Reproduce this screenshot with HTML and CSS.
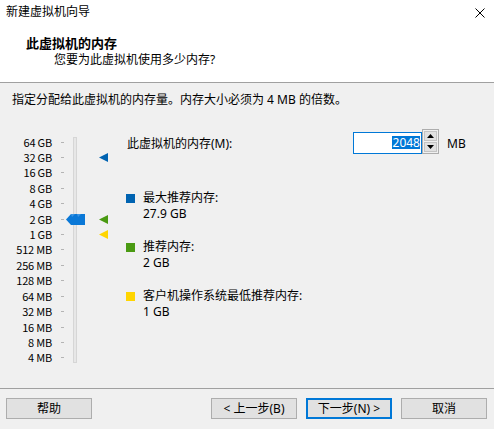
FILE: index.html
```html
<!DOCTYPE html>
<html lang="zh-CN">
<head>
<meta charset="utf-8">
<title>新建虚拟机向导</title>
<link rel="stylesheet" href="styles.css">
</head>
<body>
<div class="window">
  <div class="titlebar">
    <span class="title">新建虚拟机向导</span>
    <svg class="close" width="10" height="10" viewBox="0 0 10 10"><path d="M0.5 0.5L9.5 9.5M9.5 0.5L0.5 9.5" stroke="#000" stroke-width="1"/></svg>
  </div>
  <div class="header">
    <div class="h-title">此虚拟机的内存</div>
    <div class="h-sub">您要为此虚拟机使用多少内存?</div>
  </div>
  <div class="content">
    <p class="intro">指定分配给此虚拟机的内存量。内存大小必须为 4 MB 的倍数。</p>
    <div class="main">
      <div class="scale">
        <div class="track"></div>

        <span class="lbl r1">64 GB</span><i class="tick r1"></i>
        <span class="lbl r2">32 GB</span><i class="tick r2"></i>
        <span class="lbl r3">16 GB</span><i class="tick r3"></i>
        <span class="lbl r4">8 GB</span><i class="tick r4"></i>
        <span class="lbl r5">4 GB</span><i class="tick r5"></i>
        <span class="lbl r6">2 GB</span><i class="tick r6"></i>
        <span class="lbl r7">1 GB</span><i class="tick r7"></i>
        <span class="lbl r8">512 MB</span><i class="tick r8"></i>
        <span class="lbl r9">256 MB</span><i class="tick r9"></i>
        <span class="lbl r10">128 MB</span><i class="tick r10"></i>
        <span class="lbl r11">64 MB</span><i class="tick r11"></i>
        <span class="lbl r12">32 MB</span><i class="tick r12"></i>
        <span class="lbl r13">16 MB</span><i class="tick r13"></i>
        <span class="lbl r14">8 MB</span><i class="tick r14"></i>
        <span class="lbl r15">4 MB</span><i class="tick r15"></i>

        <svg class="thumb r6" width="19" height="11" viewBox="0 0 19 11"><polygon points="0,5.5 5,0 19,0 19,11 5,11" fill="#0a78d7"/><polygon points="5,0 9,0 6,3" fill="#3d95e3"/><polygon points="11,0 15,0 12,3" fill="#3d95e3"/></svg>

        <svg class="marker r2" width="9" height="9" viewBox="0 0 9 9"><polygon points="0,4.5 9,0 9,9" fill="#0063b1"/></svg>
        <svg class="marker r6" width="9" height="9" viewBox="0 0 9 9"><polygon points="0,4.5 9,0 9,9" fill="#4a9a12"/></svg>
        <svg class="marker r7" width="9" height="9" viewBox="0 0 9 9"><polygon points="0,4.5 9,0 9,9" fill="#ffd500"/></svg>
      </div>

      <div class="panel">
        <div class="mem-row">
          <label class="mem-label">此虚拟机的内存(M):</label>
          <div class="mem-input"><span class="sel">2048</span></div>
          <div class="spin">
            <div class="spin-btn"><svg width="7" height="4" viewBox="0 0 7 4"><polygon points="3.5,0 7,4 0,4" fill="#000"/></svg></div>
            <div class="spin-btn"><svg width="7" height="4" viewBox="0 0 7 4"><polygon points="0,0 7,0 3.5,4" fill="#000"/></svg></div>
          </div>
          <span class="unit">MB</span>
        </div>

        <div class="legend">
          <div class="item">
            <i class="sq blue"></i>
            <div class="item-text">最大推荐内存:<br>27.9 GB</div>
          </div>
          <div class="item">
            <i class="sq green"></i>
            <div class="item-text">推荐内存:<br>2 GB</div>
          </div>
          <div class="item">
            <i class="sq yellow"></i>
            <div class="item-text">客户机操作系统最低推荐内存:<br>1 GB</div>
          </div>
        </div>
      </div>
    </div>
  </div>
  <div class="footer">
    <button class="btn">帮助</button>
    <div class="nav">
      <button class="btn">&lt; 上一步(B)</button>
      <button class="btn default">下一步(N) &gt;</button>
      <button class="btn">取消</button>
    </div>
  </div>
</div>
</body>
</html>
```

FILE: styles.css
```css
* {
  box-sizing: border-box;
}

html, body {
  margin: 0;
  padding: 0;
}

body {
  width: 494px;
  height: 429px;
  overflow: hidden;
  font-family: "Noto Sans", "Noto Sans CJK SC", sans-serif;
  font-size: 12px;
  color: #000;
  background: #f0f0f0;
}

.window {
  display: flex;
  flex-direction: column;
  height: 429px;
}

/* title bar */
.titlebar {
  height: 24px;
  display: flex;
  align-items: center;
  justify-content: space-between;
  padding: 0 9px 0 6px;
  background: #fff;
  line-height: 24px;
}

.close {
  display: block;
  margin-top: 1px;
}

/* white wizard header */
.header {
  height: 59px;
  background: #fff;
  border-bottom: 1px solid #a0a0a0;
  padding-top: 11px;
}

.h-title {
  padding-left: 26px;
  font-size: 13px;
  font-weight: bold;
  line-height: 16px;
}

.h-sub {
  padding-left: 54px;
  line-height: 16px;
  margin-top: 1px;
}

/* page body */
.content {
  flex: 1;
  padding: 9px 0 0 12px;
}

.intro {
  margin: 0 0 24px;
  line-height: 16px;
}

.main {
  display: flex;
  align-items: flex-start;
}

/* memory scale */
.scale {
  display: grid;
  grid-template-columns: 40px 13px 13px 30px;
  grid-template-rows: repeat(15, 15.43px);
  margin-top: 2.3px;
  width: 96px;
}

.lbl {
  grid-column: 1;
  justify-self: end;
  align-self: center;
  font-family: "Noto Sans CJK SC", sans-serif;
  font-size: 11px;
  line-height: 13px;
  letter-spacing: -0.2px;
  white-space: nowrap;
}

.tick {
  grid-column: 2;
  justify-self: end;
  align-self: center;
  width: 3px;
  height: 1px;
  margin-right: 1px;
  background: #b4b4b4;
}

.track {
  grid-column: 3;
  grid-row: 1 / -1;
  justify-self: end;
  width: 4px;
  margin: 3px 1px 3px 0;
  border: 1px solid #d6d6d6;
  background: #e7e7e7;
}

.thumb {
  grid-column: 2 / 4;
  justify-self: end;
  align-self: center;
  margin-right: -7px;
  display: block;
}

.marker {
  grid-column: 4;
  justify-self: end;
  align-self: center;
  display: block;
}

.r1 { grid-row: 1; }
.r2 { grid-row: 2; }
.r3 { grid-row: 3; }
.r4 { grid-row: 4; }
.r5 { grid-row: 5; }
.r6 { grid-row: 6; }
.r7 { grid-row: 7; }
.r8 { grid-row: 8; }
.r9 { grid-row: 9; }
.r10 { grid-row: 10; }
.r11 { grid-row: 11; }
.r12 { grid-row: 12; }
.r13 { grid-row: 13; }
.r14 { grid-row: 14; }
.r15 { grid-row: 15; }

/* right-hand panel */
.panel {
  margin-left: 18px;
  flex: 1;
}

.mem-row {
  display: flex;
  align-items: flex-start;
  height: 22px;
}

.mem-label {
  width: 227px;
  padding-left: 1px;
  padding-top: 4px;
  line-height: 16px;
}

.mem-input {
  width: 69px;
  height: 22px;
  border: 1px solid #0078d7;
  background: #fff;
  text-align: right;
  padding: 3px 1px 0 0;
  line-height: 13px;
}

.sel {
  display: inline-block;
  background: #0078d7;
  color: #fff;
  line-height: 13px;
  padding: 0 0 0 1px;
}

.spin {
  width: 17px;
  height: 25px;
  margin-top: -3px;
  border: 1px solid #adadad;
  background: #f0f0f0;
  display: flex;
  flex-direction: column;
  gap: 1px;
  padding: 1px;
}

.spin-btn {
  flex: 1;
  background: #e1e1e1;
  border: 1px solid #c4c4c4;
  display: flex;
  align-items: center;
  justify-content: center;
}

.spin-btn svg {
  display: block;
}

.unit {
  margin-left: 8px;
  padding-top: 4px;
  line-height: 16px;
}

.legend {
  margin-top: 36px;
  display: flex;
  flex-direction: column;
  gap: 18px;
}

.item {
  display: flex;
  align-items: flex-start;
}

.sq {
  width: 9px;
  height: 9px;
  margin-top: 4px;
  margin-right: 8px;
  flex: none;
}

.sq.blue { background: #0063b1; }
.sq.green { background: #4a9a12; }
.sq.yellow { background: #ffd500; }

.item-text {
  line-height: 15.5px;
}

/* button strip */
.footer {
  height: 41px;
  border-top: 1px solid #a0a0a0;
  padding: 9px 7px 10px 6px;
  display: flex;
  justify-content: space-between;
}

.nav {
  display: flex;
  gap: 9px;
}

.btn {
  width: 86px;
  height: 21px;
  margin: 0;
  padding: 0;
  border: 1px solid #adadad;
  background: #e1e1e1;
  font-family: inherit;
  font-size: 12px;
  line-height: 17px;
  color: #000;
}

.btn.default {
  border: 2px solid #0078d7;
}
```
